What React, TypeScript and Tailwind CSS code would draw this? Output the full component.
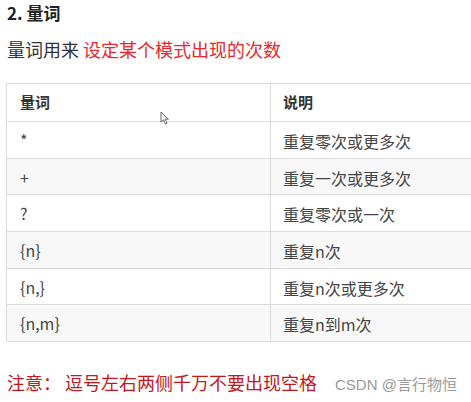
import React from "react";

const rows = [
  { q: "*", d: "重复零次或更多次" },
  { q: "+", d: "重复一次或更多次" },
  { q: "?", d: "重复零次或一次" },
  { q: "{n}", d: "重复n次" },
  { q: "{n,}", d: "重复n次或更多次" },
  { q: "{n,m}", d: "重复n到m次" },
];

function Cursor() {
  return (
    <svg width="10" height="14" viewBox="0 0 10 14" className="absolute left-[160px] top-[111px]">
      <path d="M1 1 L1 11 L3.5 8.8 L5.5 13 L7 12.3 L5.1 8.2 L8.4 8.2 Z" fill="#fff" stroke="#555" strokeWidth="0.9" strokeLinejoin="round" />
    </svg>
  );
}

export default function App() {
  return (
    <div className="relative w-[471px] h-[402px] overflow-hidden bg-white text-[#333] font-['Microsoft_YaHei','Noto_Sans_CJK_SC',sans-serif]">
      <div className="pl-[7px] pt-[1px]">
        <h2 className="text-[17px] font-bold leading-[23px] text-[#222]">2. 量词</h2>
        <p className="mt-[13px] text-[18px] leading-[24px] text-[#333]">
          量词用来 <span className="text-[#e8282b]">设定某个模式出现的次数</span>
        </p>
      </div>

      <div className="mt-[22px] ml-[6px] w-[500px] border-t border-l border-[#dcdcdc]">
        <div className="flex h-[38px] border-b border-[#dcdcdc] text-[15px] font-bold text-[#333]">
          <div className="w-[264px] border-r border-[#dcdcdc] pl-[13px] flex items-center">量词</div>
          <div className="flex-1 pl-[12px] flex items-center">说明</div>
        </div>
        {rows.map((r, i) => (
          <div
            key={r.q}
            className={
              "flex h-[36.7px] border-b border-[#dcdcdc] text-[16px] text-[#444] " +
              (i % 2 === 1 ? "bg-[#f8f8f8]" : "bg-white")
            }
          >
            <div className="w-[264px] border-r border-[#dcdcdc] pl-[13px] flex items-center">{r.q}</div>
            <div className="flex-1 pl-[12px] flex items-center pt-[2px]">{r.d}</div>
          </div>
        ))}
      </div>

      <div className="mt-[27px] pl-[7px] flex items-baseline">
        <span className="text-[18px] text-[#c4161c]">注意：</span>
        <span className="ml-[4px] text-[18px] text-[#c4161c]">逗号左右两侧千万不要出现空格</span>
        <span className="ml-[18px] text-[15px] text-[#9a9a9a] font-['Liberation_Sans','Noto_Sans_CJK_SC',sans-serif]">CSDN @言行物恒</span>
      </div>

      <Cursor />
    </div>
  );
}
